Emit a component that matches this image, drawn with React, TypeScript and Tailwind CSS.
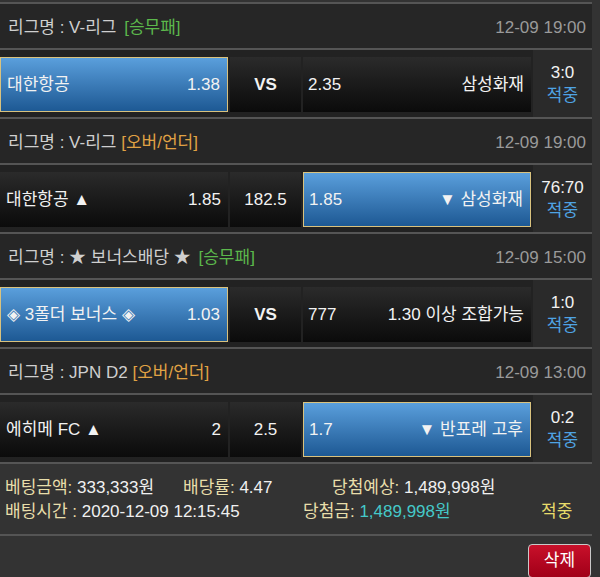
import React from 'react';

type Side = { left: string; right: string; picked: boolean };

interface Bet {
    league: string;
    kind: '승무패' | '오버/언더';
    time: string;
    home: Side;
    mid: string;
    away: Side;
    score: string;
}

const bets: Bet[] = [
    {
        league: 'V-리그',
        kind: '승무패',
        time: '12-09 19:00',
        home: { left: '대한항공', right: '1.38', picked: true },
        mid: 'VS',
        away: { left: '2.35', right: '삼성화재', picked: false },
        score: '3:0',
    },
    {
        league: 'V-리그',
        kind: '오버/언더',
        time: '12-09 19:00',
        home: { left: '대한항공 ▲', right: '1.85', picked: false },
        mid: '182.5',
        away: { left: '1.85', right: '▼ 삼성화재', picked: true },
        score: '76:70',
    },
    {
        league: '★ 보너스배당 ★',
        kind: '승무패',
        time: '12-09 15:00',
        home: { left: '◈ 3폴더 보너스 ◈', right: '1.03', picked: true },
        mid: 'VS',
        away: { left: '777', right: '1.30 이상 조합가능', picked: false },
        score: '1:0',
    },
    {
        league: 'JPN D2',
        kind: '오버/언더',
        time: '12-09 13:00',
        home: { left: '에히메 FC ▲', right: '2', picked: false },
        mid: '2.5',
        away: { left: '1.7', right: '▼ 반포레 고후', picked: true },
        score: '0:2',
    },
];

const SideCell: React.FC<{ side: Side; padLeft: string }> = ({ side, padLeft }) => (
    <div
        className={
            side.picked
                ? `w-[228px] h-full flex items-center justify-between ${padLeft} pr-[7px] border border-[#d9c27e] bg-gradient-to-b from-[#5a9fdc] to-[#1d5994]`
                : `w-[228px] h-full flex items-center justify-between ${padLeft} pr-[7px] bg-gradient-to-b from-[#2b2b2b] to-[#0b0b0b]`
        }
    >
        <span className="whitespace-nowrap">{side.left}</span>
        <span className="whitespace-nowrap">{side.right}</span>
    </div>
);

const BetBlock: React.FC<{ bet: Bet }> = ({ bet }) => (
    <div>
        <div className="h-[2px] bg-[#555555]" />
        <div className="h-[44px] bg-[#262626] flex items-center justify-between pl-[8px] pr-[6px] pt-[4px]">
            <span className="text-[#cfcfcf]">
                리그명 : {bet.league}{' '}
                <span className={bet.kind === '승무패' ? 'text-[#5cb84c] ml-[3px]' : 'text-[#e0a244]'}>
                    [{bet.kind}]
                </span>
            </span>
            <span className="text-[#9a9a9a]">{bet.time}</span>
        </div>
        <div className="h-[2px] bg-[#555555]" />
        <div className="h-[67px] bg-[#222222] pt-[7px] pb-[5px] flex gap-[2px] text-[#f2f2f2]">
            <SideCell side={bet.home} padLeft="pl-[6px]" />
            <div
                className={
                    bet.mid === 'VS'
                        ? 'w-[71px] h-full flex items-center justify-center font-bold bg-gradient-to-b from-[#2b2b2b] to-[#0b0b0b]'
                        : 'w-[71px] h-full flex items-center justify-center bg-gradient-to-b from-[#2b2b2b] to-[#0b0b0b]'
                }
            >
                {bet.mid}
            </div>
            <SideCell side={bet.away} padLeft="pl-[5px]" />
            <div className="flex-1 -mt-[7px] -mb-[5px] bg-[#2a2a2a] flex flex-col items-center justify-center leading-[23px]">
                <span>{bet.score}</span>
                <span className="text-[#4fa3e3]">적중</span>
            </div>
        </div>
    </div>
);

export default function App() {
    return (
        <div
            className="w-[600px] h-[577px] overflow-hidden bg-[#333333] text-[17px]"
            style={{ fontFamily: '"Liberation Sans", "Noto Sans CJK KR", sans-serif' }}
        >
            <div className="w-[592px] pt-[2px]">
                {bets.map((bet, i) => (
                    <BetBlock key={i} bet={bet} />
                ))}
                <div className="h-[2px] bg-[#555555]" />
                <div className="h-[70px] flex flex-col justify-center pl-[5px] leading-[24px] pt-[2px] text-[#f0f0f0]">
                    <div className="flex whitespace-nowrap">
                        <span className="w-[178px]">
                            <span className="text-[#e8deaa]">베팅금액:</span> 333,333원
                        </span>
                        <span className="w-[149px]">
                            <span className="text-[#e8deaa]">배당률:</span> 4.47
                        </span>
                        <span>
                            <span className="text-[#e8deaa]">당첨예상:</span> 1,489,998원
                        </span>
                    </div>
                    <div className="flex whitespace-nowrap">
                        <span className="w-[298px]">
                            <span className="text-[#e8deaa]">배팅시간 :</span> 2020-12-09 12:15:45
                        </span>
                        <span className="w-[238px]">
                            <span className="text-[#e8deaa]">당첨금:</span>{' '}
                            <span className="text-[#45c9c9]">1,489,998원</span>
                        </span>
                        <span className="text-[#e8dc6a]">적중</span>
                    </div>
                </div>
                <div className="h-[2px] bg-[#555555]" />
                <div className="flex justify-end pt-[8px] pr-[1px]">
                    <button className="w-[63px] h-[34px] rounded-[4px] border border-[#c9c9c9] bg-gradient-to-b from-[#c8102a] to-[#a10018] text-white">
                        삭제
                    </button>
                </div>
            </div>
        </div>
    );
}
